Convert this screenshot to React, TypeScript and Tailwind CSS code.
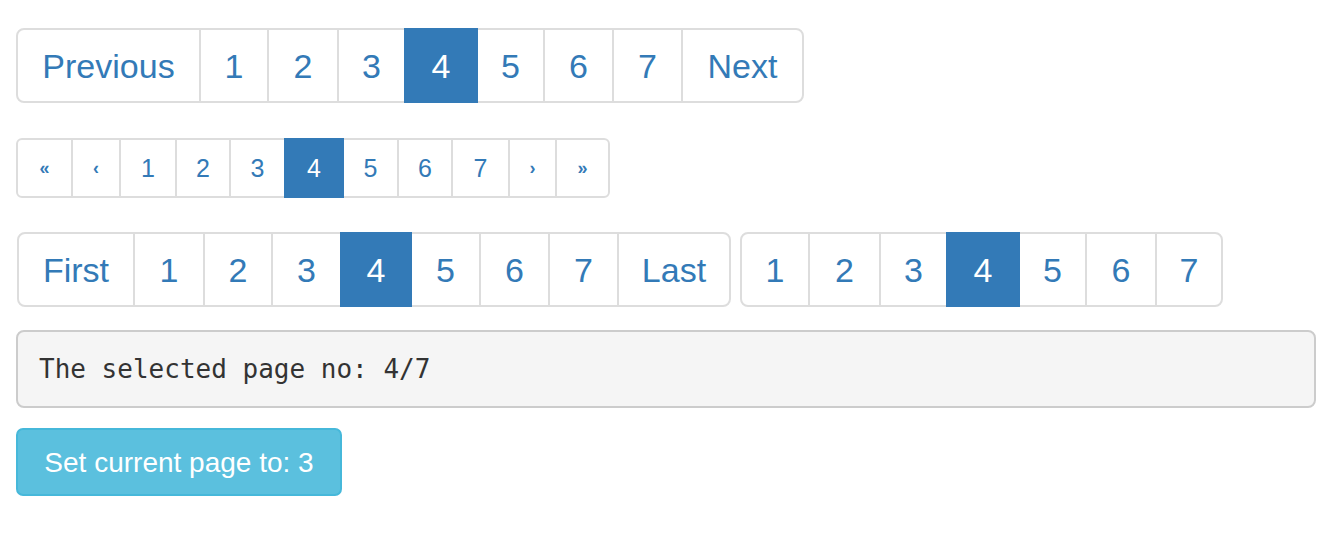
import React, { useState } from 'react';

interface PageItem {
  label: string;
  width: number;
  page?: number;
  small?: boolean;
}

interface PagerProps {
  items: PageItem[];
  current: number;
  size: 'lg' | 'md';
  onSelect: (page: number) => void;
}

const Pager: React.FC<PagerProps> = ({ items, current, size, onSelect }) => {
  const lg = size === 'lg';
  return (
    <ul className={`flex ${lg ? 'h-[75px] text-[34px]' : 'h-[60px] text-[25px]'}`}>
      {items.map((item, i) => {
        const active = item.page === current;
        const first = i === 0;
        const last = i === items.length - 1;
        return (
          <li
            key={i}
            onClick={() => item.page && onSelect(item.page)}
            style={{ width: item.width }}
            className={[
              'flex cursor-pointer items-center justify-center border-2 pt-px',
              first ? '' : '-ml-[2px]',
              item.small ? 'text-[18px] font-bold' : '',
              first ? (lg ? 'rounded-l-[8px]' : 'rounded-l-[6px]') : '',
              last ? (lg ? 'rounded-r-[8px]' : 'rounded-r-[6px]') : '',
              active
                ? 'relative z-10 border-[#337ab7] bg-[#337ab7] text-white'
                : 'border-[#dddddd] bg-white text-[#337ab7]',
            ].join(' ')}
          >
            {item.label}
          </li>
        );
      })}
    </ul>
  );
};

const App: React.FC = () => {
  const [page, setPage] = useState(4);
  const total = 7;

  const row1: PageItem[] = [
    { label: 'Previous', width: 185, page: Math.max(1, page - 1) },
    { label: '1', width: 70, page: 1 },
    { label: '2', width: 72, page: 2 },
    { label: '3', width: 69, page: 3 },
    { label: '4', width: 74, page: 4 },
    { label: '5', width: 69, page: 5 },
    { label: '6', width: 71, page: 6 },
    { label: '7', width: 71, page: 7 },
    { label: 'Next', width: 123, page: Math.min(total, page + 1) },
  ];

  const row2: PageItem[] = [
    { label: '«', width: 57, small: true },
    { label: '‹', width: 50, small: true },
    { label: '1', width: 58, page: 1 },
    { label: '2', width: 56, page: 2 },
    { label: '3', width: 57, page: 3 },
    { label: '4', width: 60, page: 4 },
    { label: '5', width: 57, page: 5 },
    { label: '6', width: 56, page: 6 },
    { label: '7', width: 59, page: 7 },
    { label: '›', width: 49, small: true },
    { label: '»', width: 55, small: true },
  ];

  const row3a: PageItem[] = [
    { label: 'First', width: 118 },
    { label: '1', width: 72, page: 1 },
    { label: '2', width: 70, page: 2 },
    { label: '3', width: 71, page: 3 },
    { label: '4', width: 72, page: 4 },
    { label: '5', width: 71, page: 5 },
    { label: '6', width: 71, page: 6 },
    { label: '7', width: 71, page: 7 },
    { label: 'Last', width: 114 },
  ];

  const row3b: PageItem[] = [
    { label: '1', width: 70, page: 1 },
    { label: '2', width: 73, page: 2 },
    { label: '3', width: 69, page: 3 },
    { label: '4', width: 74, page: 4 },
    { label: '5', width: 69, page: 5 },
    { label: '6', width: 72, page: 6 },
    { label: '7', width: 68, page: 7 },
  ];

  return (
    <div className="min-h-screen bg-white px-4 pt-[28px] font-['Liberation_Sans',Arial,sans-serif]">
      <Pager items={row1} current={page} size="lg" onSelect={setPage} />
      <div className="mt-[35px]">
        <Pager items={row2} current={page} size="md" onSelect={setPage} />
      </div>
      <div className="mt-[34px] flex gap-[9px] pl-px">
        <Pager items={row3a} current={page} size="lg" onSelect={setPage} />
        <Pager items={row3b} current={page} size="lg" onSelect={setPage} />
      </div>
      <pre className="mt-[23px] flex h-[78px] w-[1300px] items-center rounded-[8px] border-2 border-[#cccccc] bg-[#f5f5f5] px-[21px] font-['DejaVu_Sans_Mono',monospace] text-[26px] text-[#333333]">
        The selected page no: {page}/{total}
      </pre>
      <button
        onClick={() => setPage(3)}
        className="mt-[20px] h-[68px] w-[326px] rounded-[7px] border-2 border-[#46b8da] bg-[#5bc0de] pt-px text-[28px] text-white"
      >
        Set current page to: 3
      </button>
    </div>
  );
};

export default App;
